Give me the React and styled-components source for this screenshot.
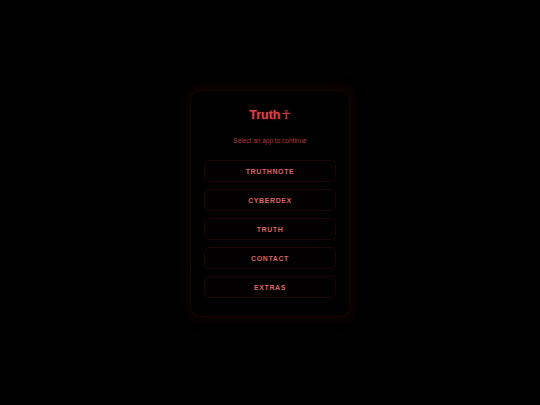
import React from "react";
import styled, { createGlobalStyle } from "styled-components";

const Global = createGlobalStyle`
  html, body { margin: 0; padding: 0; background: #010101; }
  body { font-family: "Liberation Sans", Arial, sans-serif; }
`;

const Page = styled.div`
  width: 540px;
  height: 405px;
  display: flex;
  align-items: center;
  justify-content: center;
  background: #010101;
`;

const Card = styled.div`
  width: 160px;
  box-sizing: border-box;
  padding: 16px 13px 18px;
  background: #000;
  border: 1px solid #1c0505;
  border-radius: 10px;
  box-shadow: 0 0 12px 4px rgba(90, 0, 0, 0.18);
  display: flex;
  flex-direction: column;
  align-items: stretch;
  margin-top: 2px;
`;

const Title = styled.h1`
  margin: 0;
  font-size: 12.5px;
  line-height: 16px;
  font-weight: 700;
  color: #e0444a;
  text-align: center;
  text-shadow: 0 0 4px rgba(224, 68, 74, 0.3);
`;

const Ankh = styled.span`
  font-family: "DejaVu Sans", sans-serif;
  font-weight: 700;
  margin-left: 1px;
`;

const Subtitle = styled.p`
  margin: 14px 0 0;
  font-size: 6.5px;
  line-height: 8px;
  color: #b23a3d;
  text-align: center;
`;

const List = styled.div`
  margin-top: 15px;
  display: flex;
  flex-direction: column;
  gap: 7px;
`;

const AppButton = styled.button`
  height: 22px;
  box-sizing: border-box;
  background: #020000;
  border: 1px solid #1c0606;
  border-radius: 5px;
  color: #dc6467;
  font-family: "Liberation Sans", Arial, sans-serif;
  font-weight: 700;
  font-size: 7px;
  letter-spacing: 0.6px;
  text-transform: uppercase;
  padding: 0;
  cursor: pointer;
`;

const apps = ["Truthnote", "Cyberdex", "Truth", "Contact", "Extras"];

export default function App() {
  return (
    <Page>
      <Global />
      <Card>
        <Title>
          Truth<Ankh>☥</Ankh>
        </Title>
        <Subtitle>Select an app to continue</Subtitle>
        <List>
          {apps.map((a) => (
            <AppButton key={a}>{a}</AppButton>
          ))}
        </List>
      </Card>
    </Page>
  );
}
